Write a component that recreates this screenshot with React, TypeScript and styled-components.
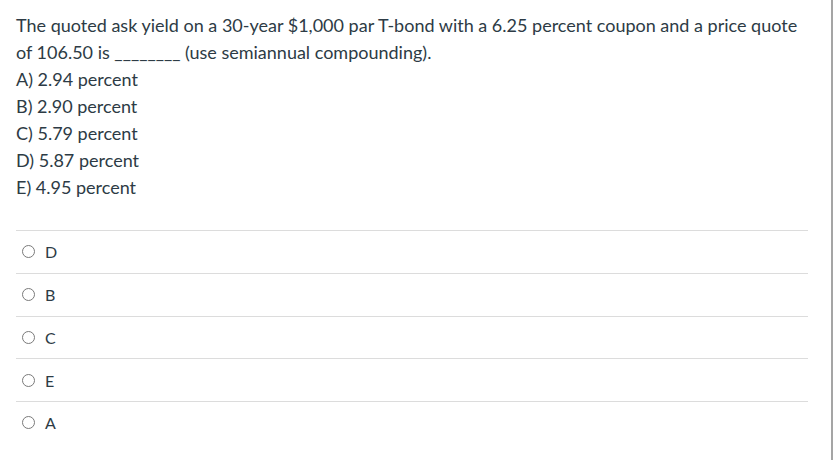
import React from "react";
import styled, { createGlobalStyle } from "styled-components";

const GlobalStyle = createGlobalStyle`
  html, body {
    margin: 0;
    padding: 0;
    background: #ffffff;
  }
  body {
    font-family: Lato, "Open Sans", "Liberation Sans", sans-serif;
    color: #2d3b45;
  }
`;

const Page = styled.div`
  box-sizing: border-box;
  width: 833px;
  min-height: 460px;
  border-right: 2px solid #a5a5a5;
  padding: 12px 0 0 16px;
`;

const Question = styled.div`
  width: 792px;
  font-size: 18px;
  line-height: 27px;
`;

const Choices = styled.div``;

const AnswerList = styled.div`
  width: 792px;
  margin-top: 29px;
`;

const AnswerRow = styled.label`
  box-sizing: border-box;
  display: flex;
  align-items: center;
  gap: 10px;
  height: 42.75px;
  border-top: 1px solid #dcdcdc;
  padding-left: 6px;
  font-size: 16px;
  color: #2d3b45;
`;

const Radio = styled.span`
  box-sizing: border-box;
  width: 13px;
  height: 13px;
  border: 1px solid #7a7a7a;
  border-radius: 50%;
  flex: none;
`;

const choices = [
  "A) 2.94 percent",
  "B) 2.90 percent",
  "C) 5.79 percent",
  "D) 5.87 percent",
  "E) 4.95 percent",
];

const answers = ["D", "B", "C", "E", "A"];

export default function App() {
  return (
    <>
      <GlobalStyle />
      <Page>
        <Question>
          The quoted ask yield on a 30-year $1,000 par T-bond with a 6.25 percent coupon and a price quote
          of 106.50 is ________ (use semiannual compounding).
          <Choices>
            {choices.map((c) => (
              <div key={c}>{c}</div>
            ))}
          </Choices>
        </Question>
        <AnswerList>
          {answers.map((a) => (
            <AnswerRow key={a}>
              <Radio />
              {a}
            </AnswerRow>
          ))}
        </AnswerList>
      </Page>
    </>
  );
}
